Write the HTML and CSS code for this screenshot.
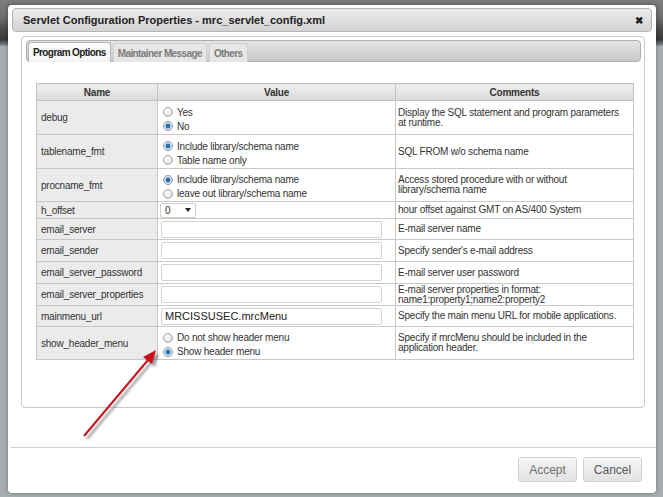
FILE: index.html
```html
<!DOCTYPE html>
<html>
<head>
<meta charset="utf-8">
<link rel="stylesheet" href="styles.css">
</head>
<body>
<div class="backdrop">
  <div class="backdrop-top"></div>
</div>
<div class="dialog">
  <div class="titlebar">
    <span class="title">Servlet Configuration Properties - mrc_servlet_config.xml</span>
    <span class="close">✖</span>
  </div>
  <div class="panel">
    <div class="tabbar">
      <span class="tab active">Program Options</span>
      <span class="tab">Maintainer Message</span>
      <span class="tab">Others</span>
    </div>
    <table class="props">
      <colgroup><col class="c1"><col class="c2"><col class="c3"></colgroup>
      <tr class="head"><th>Name</th><th>Value</th><th>Comments</th></tr>
      <tr class="r34">
        <td class="name">debug</td>
        <td class="val vr"><label class="rad"><span class="radio"></span>Yes</label><label class="rad"><span class="radio on"></span>No</label></td>
        <td class="cmt">Display the SQL statement and program parameters<br>at runtime.</td>
      </tr>
      <tr class="r34">
        <td class="name">tablename_fmt</td>
        <td class="val vr"><label class="rad"><span class="radio on"></span>Include library/schema name</label><label class="rad"><span class="radio"></span>Table name only</label></td>
        <td class="cmt">SQL FROM w/o schema name</td>
      </tr>
      <tr class="r33">
        <td class="name">procname_fmt</td>
        <td class="val vr"><label class="rad"><span class="radio on"></span>Include library/schema name</label><label class="rad"><span class="radio"></span>leave out library/schema name</label></td>
        <td class="cmt">Access stored procedure with or without<br>library/schema name</td>
      </tr>
      <tr class="r17">
        <td class="name">h_offset</td>
        <td class="val"><div class="select"><span>0</span><span class="caret"></span></div></td>
        <td class="cmt">hour offset against GMT on AS/400 System</td>
      </tr>
      <tr class="r21">
        <td class="name">email_server</td>
        <td class="val"><input class="txt" type="text" value=""></td>
        <td class="cmt">E-mail server name</td>
      </tr>
      <tr class="r22">
        <td class="name">email_sender</td>
        <td class="val"><input class="txt" type="text" value=""></td>
        <td class="cmt">Specify sender's e-mail address</td>
      </tr>
      <tr class="r22">
        <td class="name">email_server_password</td>
        <td class="val"><input class="txt" type="text" value=""></td>
        <td class="cmt">E-mail server user password</td>
      </tr>
      <tr class="r22">
        <td class="name">email_server_properties</td>
        <td class="val"><input class="txt" type="text" value=""></td>
        <td class="cmt">E-mail server properties in format:<br>name1:property1;name2:property2</td>
      </tr>
      <tr class="r21">
        <td class="name">mainmenu_url</td>
        <td class="val"><input class="txt big" type="text" value="MRCISSUSEC.mrcMenu"></td>
        <td class="cmt">Specify the main menu URL for mobile applications.</td>
      </tr>
      <tr class="r33">
        <td class="name">show_header_menu</td>
        <td class="val vr"><label class="rad"><span class="radio"></span>Do not show header menu</label><label class="rad"><span class="radio on"></span>Show header menu</label></td>
        <td class="cmt">Specify if mrcMenu should be included in the<br>application header.</td>
      </tr>
    </table>
  </div>
  <div class="footer">
    <button class="btn faded">Accept</button>
    <button class="btn">Cancel</button>
  </div>
</div>
<svg class="arrow" width="663" height="497" viewBox="0 0 663 497">
  <defs>
    <filter id="sh" x="-20%" y="-20%" width="140%" height="140%">
      <feGaussianBlur stdDeviation="1.2"/>
    </filter>
  </defs>
  <g transform="translate(3,3)" filter="url(#sh)" opacity="0.55">
    <line x1="84" y1="436" x2="148" y2="360" stroke="#555" stroke-width="2.4"/>
    <polygon points="156,350 152,364 143,357" fill="#555"/>
  </g>
  <line x1="84" y1="436" x2="148" y2="360" stroke="#c8111a" stroke-width="2"/>
  <polygon points="156,350 152,364 143,357" fill="#c8111a"/>
</svg>
</body>
</html>
```
FILE: styles.css
```css
html, body {
  margin: 0;
  padding: 0;
}
body {
  width: 663px;
  height: 497px;
  overflow: hidden;
  position: relative;
  font-family: "Liberation Sans", Arial, sans-serif;
  color: #333;
  background: #a7aeb2;
}
.backdrop {
  height: 497px;
}
.backdrop-top {
  height: 46px;
  background: linear-gradient(#7a7c7e 0, #6c6e70 18px, #474849 30px, #3a3a3a 40px, #8e9498 46px);
}
.dialog {
  position: absolute;
  left: 8px;
  top: 5px;
  width: 648px;
  height: 488px;
  background: #fff;
  border-radius: 4px;
  box-shadow: 0 0 4px rgba(0,0,0,0.35);
  display: flex;
  flex-direction: column;
}
.titlebar {
  margin: 3px 4px 0 4px;
  height: 24px;
  box-sizing: border-box;
  border: 1px solid #b5b5b5;
  border-radius: 4px;
  background: linear-gradient(#ececec, #d2d2d2);
  display: flex;
  align-items: center;
  justify-content: space-between;
  padding: 0 8px 0 10px;
}
.title {
  font-weight: bold;
  font-size: 11px;
  color: #222;
}
.close {
  font-size: 10px;
  color: #222;
  font-weight: bold;
}
.panel {
  margin: 4px 0 0 13px;
  width: 624px;
  height: 372px;
  box-sizing: border-box;
  border: 1px solid #c9c9c9;
  border-radius: 4px;
  padding: 3px 3px 0 4px;
}
.tabbar {
  height: 22px;
  box-sizing: border-box;
  border: 1px solid #b0b0b0;
  border-radius: 4px;
  background: linear-gradient(#e4e4e4, #c9c9c9);
  display: flex;
  align-items: flex-end;
  padding: 0 0 0 1px;
  gap: 2px;
}
.tab {
  height: 19px;
  box-sizing: border-box;
  margin-bottom: -1px;
  border: 1px solid #d0d0d0;
  border-bottom: none;
  border-radius: 3px 3px 0 0;
  background: #e6e6e6;
  font-size: 10px;
  font-weight: bold;
  color: #7a7a7a;
  padding: 4px 4px 0 4px;
  letter-spacing: -0.6px;
}
.tab.active {
  background: linear-gradient(#fdfdfd, #f4f4f4);
  border-color: #b5b5b5;
  color: #222;
  height: 20px;
}
.props {
  margin: 21px 0 0 10px;
  border-collapse: collapse;
  table-layout: fixed;
  width: 597px;
  border: 1px solid #c2c2c2;
  font-size: 10px;
  letter-spacing: -0.22px;
}
.c1 { width: 121px; }
.c2 { width: 238px; }
.c3 { width: 238px; }
.props th, .props td {
  border: 1px solid #c8c8c8;
  padding: 0;
}
.head th {
  height: 16px;
  background: linear-gradient(#efefef, #dadada);
  font-weight: bold;
  color: #333;
  font-size: 10px;
  text-align: center;
  border-color: #c2c2c2;
}
.r34 td { height: 33px; }
.r33 td { height: 32px; }
.r17 td { height: 16px; }
.r21 td { height: 20px; }
.r22 td { height: 21px; }
.name {
  background: #ebebeb;
  padding-left: 4px !important;
  color: #333;
}
.val {
  padding-left: 5px !important;
}
.props td.vr {
  padding-top: 3px;
  height: auto;
  box-sizing: border-box;
}
.cmt {
  padding-left: 2px !important;
  line-height: 10px;
  color: #333;
  white-space: nowrap;
}
.rad {
  display: flex;
  align-items: center;
  height: 14px;
  color: #333;
}
.radio {
  width: 8px;
  height: 8px;
  border-radius: 50%;
  border: 1px solid #a6a6a6;
  background: radial-gradient(circle at 40% 35%, #ffffff, #dcdcdc 80%);
  margin-right: 4px;
  box-sizing: content-box;
  flex: none;
}
.radio.on {
  border-color: #8d9aa6;
  background: radial-gradient(circle at 50% 50%, #1d5c97 0, #2f78b8 2px, #d9e4ee 3px, #eef2f5 100%);
}
.select {
  width: 36px;
  height: 15px;
  box-sizing: border-box;
  border: 1px solid #cfcfcf;
  border-radius: 2px;
  display: flex;
  align-items: center;
  justify-content: space-between;
  padding: 0 4px 0 4px;
  margin-left: -3px;
  font-size: 10px;
  color: #333;
}
.caret {
  width: 0;
  height: 0;
  border-left: 3px solid transparent;
  border-right: 3px solid transparent;
  border-top: 4px solid #222;
}
.txt {
  display: block;
  width: 221px;
  height: 17px;
  box-sizing: border-box;
  border: 1px solid #d3d3d3;
  border-radius: 2px;
  margin: 0 0 0 -2px;
  padding: 0 3px;
  font-family: "Liberation Sans", Arial, sans-serif;
  font-size: 10px;
  color: #222;
  outline: none;
}
.txt.big {
  font-size: 11px;
  letter-spacing: 0;
}
.footer {
  margin-top: 39px;
  border-top: 1px solid #cfcfcf;
  margin-left: 3px;
  padding: 9px 14px 0 0;
  display: flex;
  justify-content: flex-end;
  gap: 6px;
}
.btn {
  height: 25px;
  width: 59px;
  box-sizing: border-box;
  border: 1px solid #d0d0d0;
  border-radius: 3px;
  background: linear-gradient(#f6f6f6, #e2e2e2);
  font-family: "Liberation Sans", Arial, sans-serif;
  font-size: 12px;
  color: #555;
  padding: 0;
  margin: 0;
}
.btn.faded {
  color: #6f6f6f;
}
.arrow {
  position: absolute;
  left: 0;
  top: 0;
  pointer-events: none;
}
```
